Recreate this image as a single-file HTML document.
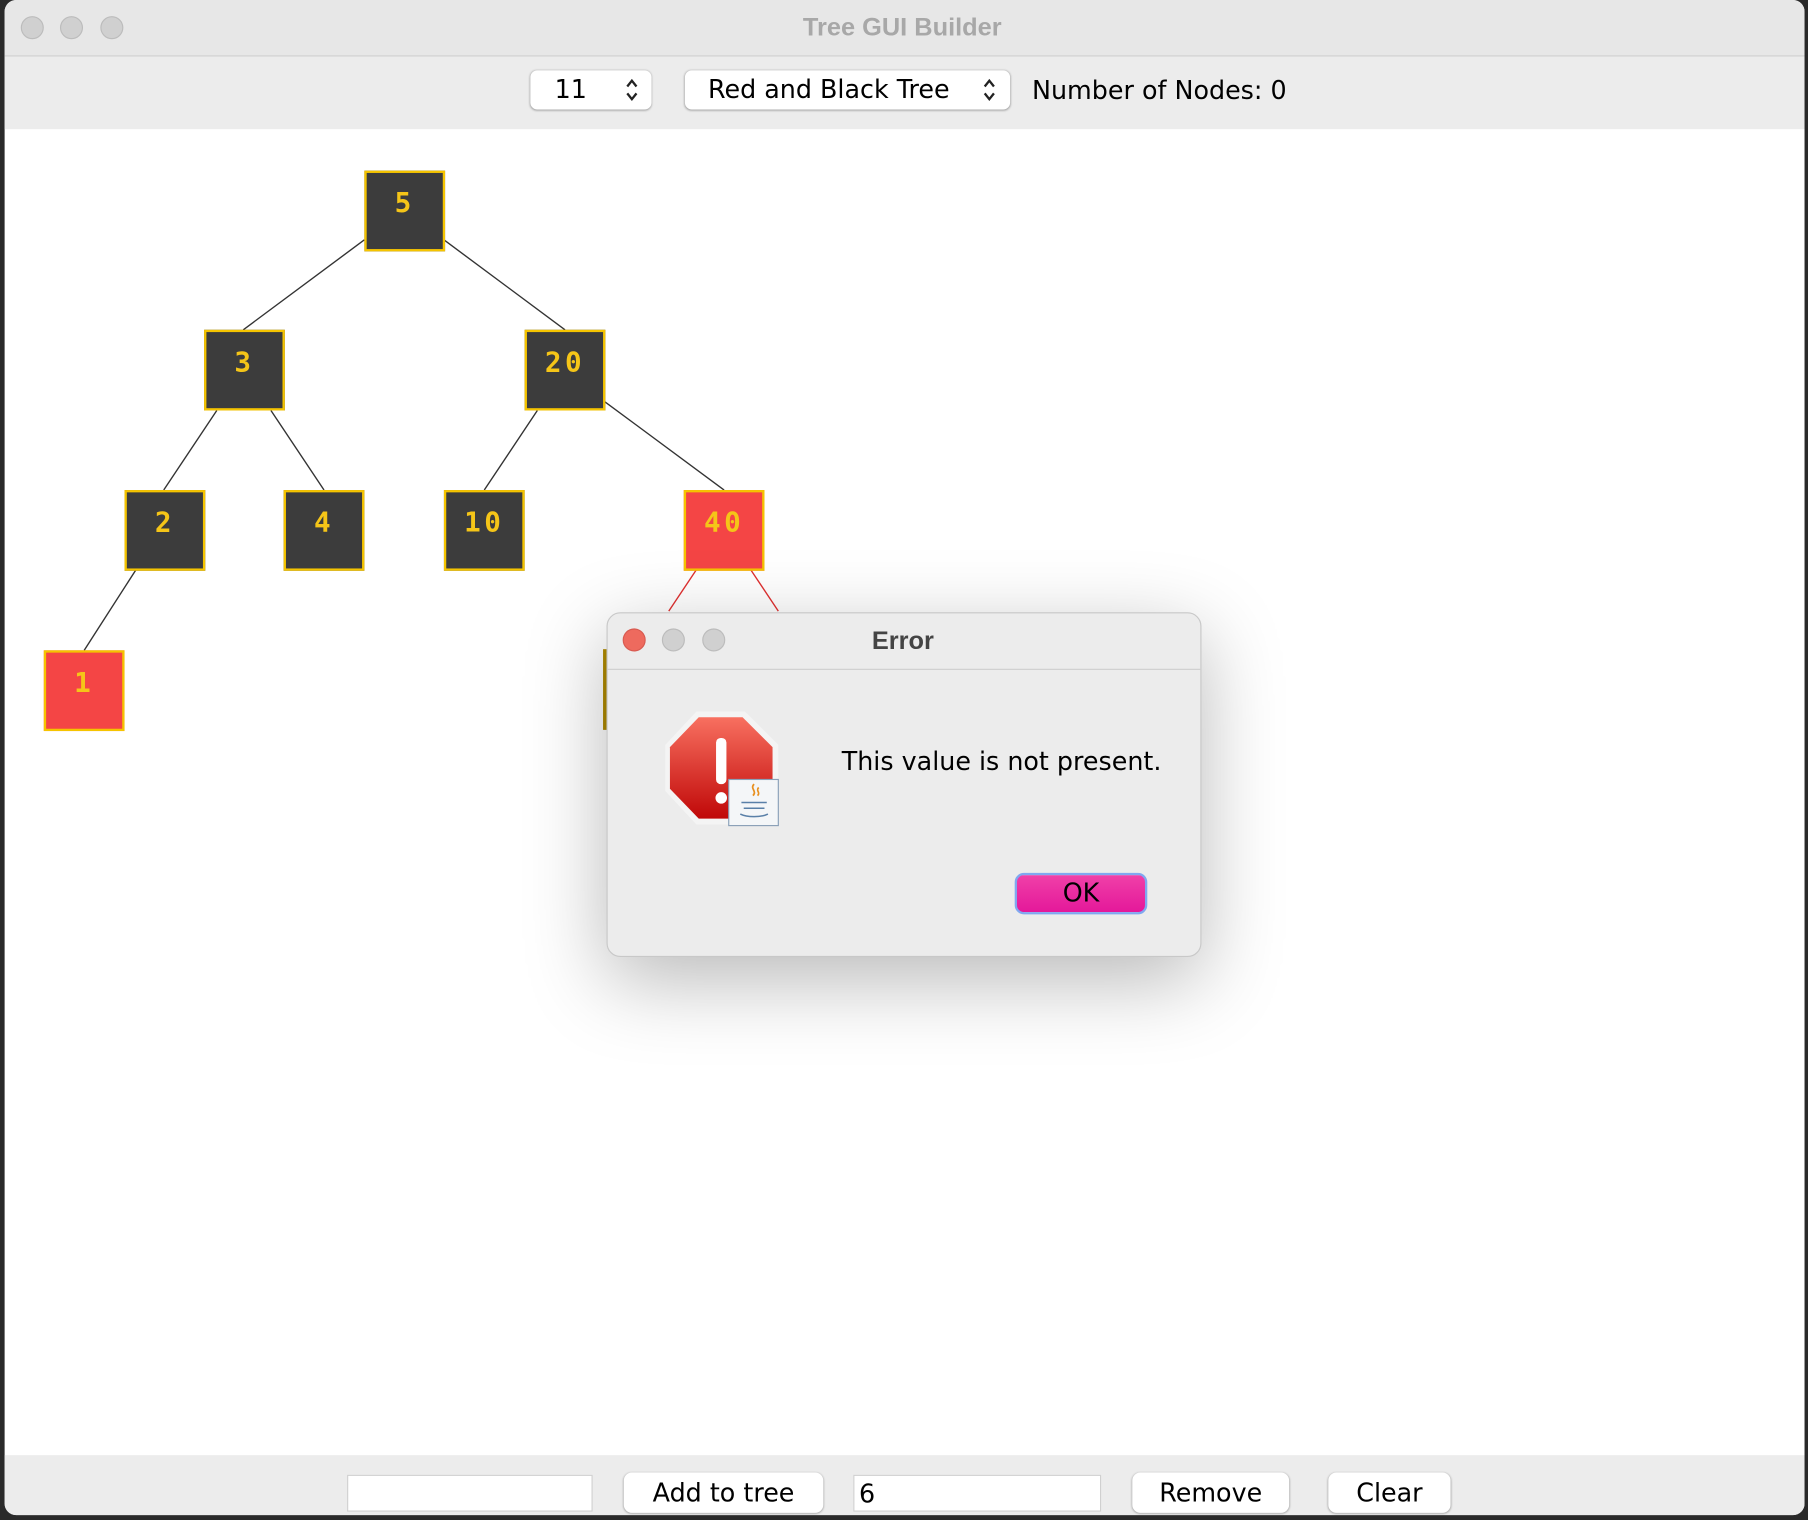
<!DOCTYPE html>
<html><head><meta charset="utf-8"><style>
html,body{margin:0;padding:0;width:1808px;height:1520px;overflow:hidden;background:#2a2a2a;}
#s{position:absolute;left:0;top:0;width:1568px;height:1318px;transform:scale(1.15306);transform-origin:0 0;font-family:"DejaVu Sans","Liberation Sans",sans-serif;}
.a{position:absolute;}
.win{left:4px;top:0;width:1561px;height:1314px;background:#fff;border-radius:10px;overflow:hidden;}
.tl{border-radius:50%;width:20px;height:20px;background:#d0d0d0;border:1px solid #bcbcbc;box-sizing:border-box;}
.box{background:#fff;border-radius:6px;box-shadow:0 0.5px 2px rgba(0,0,0,.35);}
.n{width:70px;height:70px;box-sizing:border-box;border:2px solid #f5c400;background:#3c3c3c;color:#f5c518;font:bold 24px "DejaVu Sans Mono","Liberation Mono",monospace;text-align:center;line-height:52px;letter-spacing:3px;}
.r{background:#f44545;}
.btn{background:#fff;border-radius:7px;box-shadow:0 0.5px 2px rgba(0,0,0,.35);font-size:22px;text-align:center;line-height:37px;color:#000;}
.fld{background:#fff;border:1px solid #d0d0d0;box-sizing:border-box;}
.arr{width:14px;height:22px;}
</style></head><body><div id="s">
<div class="a win">
 <div class="a" style="left:0;top:0;width:1561px;height:48px;background:#e7e7e7;border-bottom:1px solid #d0d0d0;"></div>
 <div class="a tl" style="left:14px;top:14px"></div>
 <div class="a tl" style="left:48px;top:14px"></div>
 <div class="a tl" style="left:83px;top:14px"></div>
 <div class="a" style="left:-2px;top:11px;width:1561px;text-align:center;font:bold 22px 'Liberation Sans',sans-serif;color:#a8a8a8;">Tree GUI Builder</div>
 <div class="a" style="left:0;top:49px;width:1561px;height:63px;background:#ececec;"></div>
 <div class="a box" style="left:456px;top:61px;width:105px;height:34px;"></div>
 <div class="a" style="left:477px;top:66px;font-size:22px;">11</div>
 <svg class="a arr" style="left:537px;top:67px" viewBox="0 0 14 22"><path d="M3 8l4-5 4 5M3 14l4 5 4-5" stroke="#222" stroke-width="2" fill="none"/></svg>
 <div class="a box" style="left:590px;top:61px;width:282px;height:34px;"></div>
 <div class="a" style="left:610px;top:66px;font-size:22px;">Red and Black Tree</div>
 <svg class="a arr" style="left:847px;top:67px" viewBox="0 0 14 22"><path d="M3 8l4-5 4 5M3 14l4 5 4-5" stroke="#222" stroke-width="2" fill="none"/></svg>
 <div class="a" style="left:891px;top:67px;font-size:22px;">Number of Nodes: 0</div>
 <svg class="a" style="left:-4px;top:0" width="1568" height="1318">
  <g stroke="#333" stroke-width="1.2">
   <line x1="316" y1="208" x2="211" y2="286"/><line x1="385" y1="208" x2="490" y2="286"/>
   <line x1="188" y1="356" x2="142" y2="425"/><line x1="235" y1="356" x2="281" y2="425"/>
   <line x1="466" y1="356" x2="420" y2="425"/><line x1="524" y1="348" x2="628" y2="425"/>
   <line x1="118" y1="494" x2="73" y2="564"/>
  </g>
  <g stroke="#e03030" stroke-width="1.2"><line x1="604" y1="494" x2="580" y2="530"/><line x1="651" y1="494" x2="675" y2="530"/></g>
  <rect x="523" y="563" width="3" height="70" fill="#b08a00"/>
 </svg>
 <div class="a n" style="left:312px;top:148px">5</div>
 <div class="a n" style="left:173px;top:286px">3</div>
 <div class="a n" style="left:451px;top:286px">20</div>
 <div class="a n" style="left:104px;top:425px">2</div>
 <div class="a n" style="left:242px;top:425px">4</div>
 <div class="a n" style="left:381px;top:425px">10</div>
 <div class="a n r" style="left:589px;top:425px">40</div>
 <div class="a n r" style="left:34px;top:564px">1</div>
 <div class="a" style="left:0;top:1262px;width:1561px;height:52px;background:#ececec;"></div>
 <div class="a fld" style="left:297px;top:1279px;width:213px;height:32px;"></div>
 <div class="a btn" style="left:537px;top:1277px;width:173px;height:35px;">Add to tree</div>
 <div class="a fld" style="left:736px;top:1279px;width:215px;height:32px;font-size:22px;line-height:34px;padding-left:4px;">6</div>
 <div class="a btn" style="left:978px;top:1277px;width:136px;height:35px;">Remove</div>
 <div class="a btn" style="left:1148px;top:1277px;width:106px;height:35px;">Clear</div>
</div>
<div class="a" style="left:526px;top:531px;width:516px;height:299px;background:#ececec;border-radius:12px;border:1px solid #c8c8c8;box-sizing:border-box;box-shadow:0 20px 70px rgba(0,0,0,.28);overflow:hidden;">
 <div class="a" style="left:0;top:0;width:516px;height:48px;border-bottom:1px solid #cfcfcf;"></div>
 <div class="a tl" style="left:13px;top:13px;background:#ee6a5e;border-color:#d85a50"></div>
 <div class="a tl" style="left:47px;top:13px"></div>
 <div class="a tl" style="left:82px;top:13px"></div>
 <div class="a" style="left:0;top:11px;width:512px;text-align:center;font:bold 22px 'Liberation Sans',sans-serif;color:#444;">Error</div>
 <svg class="a" style="left:49px;top:84px" width="104" height="102">
  <polygon points="28,1 70,1 99,30 99,70 70,99 28,99 1,70 1,30" fill="#f4f4f4"/>
  <defs><linearGradient id="g" x1="0" y1="0" x2="0" y2="1"><stop offset="0" stop-color="#f87060"/><stop offset="1" stop-color="#c00808"/></linearGradient></defs>
  <polygon points="30,6 68,6 94,32 94,68 68,94 30,94 5,68 5,32" fill="url(#g)"/>
  <rect x="45" y="24" width="9" height="40" rx="4" fill="#fff"/><circle cx="49.5" cy="76" r="5" fill="#fff"/>
  <rect x="56" y="60" width="43" height="40" fill="#f4f6f8" stroke="#8aa0b8"/>
  <path d="M78 64c-4 4 3 6-1 10M82 67c-3 3 2 4-1 7" stroke="#e89020" fill="none" stroke-width="1.5"/>
  <path d="M67 80h22M69 85h18M66 90c6 3 18 3 24 0" stroke="#5a80a8" fill="none" stroke-width="1.3"/>
 </svg>
 <div class="a" style="left:203px;top:117px;font-size:22px;color:#000;">This value is not present.</div>
 <div class="a" style="left:353px;top:225px;width:115px;height:36px;border-radius:8px;background:linear-gradient(#f040a8,#e4189a);border:2px solid #80a8f0;box-sizing:border-box;text-align:center;line-height:33px;font-size:22px;color:#000;">OK</div>
</div>
</div></body></html>
